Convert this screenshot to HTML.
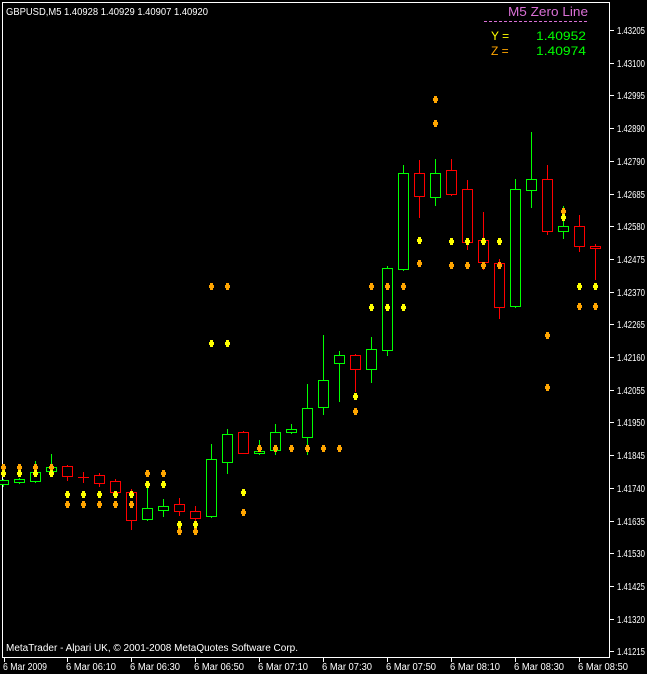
<!DOCTYPE html>
<html><head><meta charset="utf-8"><style>
html,body{margin:0;padding:0;background:#000;}
svg{display:block;}
text{font-family:"Liberation Sans",sans-serif;}
</style></head><body>
<svg id="s" width="647" height="674" xmlns="http://www.w3.org/2000/svg" shape-rendering="crispEdges">
<rect width="647" height="674" fill="#000"/>
<rect x="2.5" y="2.5" width="607" height="655" fill="none" stroke="#fff" stroke-width="1"/>
<g id="c"></g>
<g id="d"></g>
<text x="6" y="15" fill="#fff" font-size="10" textLength="202" lengthAdjust="spacingAndGlyphs">GBPUSD,M5  1.40928 1.40929 1.40907 1.40920</text>
<text x="508" y="16" fill="#da70d6" font-size="13" textLength="80" lengthAdjust="spacingAndGlyphs">M5 Zero Line</text>
<line x1="484" y1="21.5" x2="588" y2="21.5" stroke="#da70d6" stroke-dasharray="3,2"/>
<text x="491" y="40" fill="#ffff00" font-size="12">Y =</text>
<text x="536" y="40" fill="#00ff00" font-size="12" textLength="50" lengthAdjust="spacingAndGlyphs">1.40952</text>
<text x="491" y="55" fill="#ffa500" font-size="12">Z =</text>
<text x="536" y="55" fill="#00ff00" font-size="12" textLength="50" lengthAdjust="spacingAndGlyphs">1.40974</text>
<text x="6" y="651" fill="#fff" font-size="10" textLength="292" lengthAdjust="spacingAndGlyphs">MetaTrader - Alpari UK, © 2001-2008 MetaQuotes Software Corp.</text>
<g id="p" fill="#fff" font-size="10"></g>
<g id="t" fill="#fff" font-size="10"></g>
</svg>
<script>
var ns="http://www.w3.org/2000/svg";
function el(p,n,a,txt){var e=document.createElementNS(ns,n);for(var k in a)e.setAttribute(k,a[k]);if(txt)e.textContent=txt;document.getElementById(p).appendChild(e);return e;}
// [green?, bodyTop, bodyBot, wickTop, wickBot]
var C=[[1,480,484,479,486],[1,479,482,478,483],[1,472,481,461,482],[1,467,471,454,472],[0,466,476,465,480],[0,477,477,472,482],
[0,475,483,473,486],[0,481,492,479,493],[0,492,520,489,529],[1,508,519,485,520],[1,506,510,499,516],[0,504,511,498,515],
[0,511,518,506,528],[1,459,516,444,517],[1,434,462,429,473],[0,432,453,431,453],[1,451,453,440,454],[1,432,450,424,454],
[1,429,432,424,433],[1,408,437,384,454],[1,380,407,335,414],[1,355,363,351,401],[0,355,369,354,391],[1,349,369,337,382],
[1,268,350,266,355],[1,173,269,165,270],[0,173,196,160,217],[1,173,197,159,205],[0,170,194,159,195],[0,189,242,180,249],
[0,240,262,212,269],[0,263,307,259,318],[1,189,306,179,307],[1,179,190,132,207],[0,179,231,165,234],[1,226,231,206,238],
[0,226,246,215,251],[0,246,248,244,279]];
C.forEach(function(c,k){var x=3+16*k,col=c[0]?"#00ff00":"#ff0000";
 el("c","line",{x1:x+.5,y1:c[3],x2:x+.5,y2:c[4]+1,stroke:col});
 if(c[2]-c[1]<1){el("c","line",{x1:x-5,y1:c[1]+.5,x2:x+6,y2:c[1]+.5,stroke:col});}
 else el("c","rect",{x:x-4.5,y:c[1]+.5,width:10,height:c[2]-c[1],fill:"#000",stroke:col});
});
var Y="#ffff00",O="#ffa500";
var D=[[0,467,O],[0,473,Y],[1,467,O],[1,473,Y],[2,467,O],[2,473,Y],[3,467,O],[3,473,Y],
[4,494,Y],[4,504,O],[5,494,Y],[5,504,O],[6,494,Y],[6,504,O],[7,494,Y],[7,504,O],[8,494,Y],[8,504,O],
[9,473,O],[9,484,Y],[10,473,O],[10,484,Y],[11,524,Y],[11,531,O],[12,524,Y],[12,531,O],
[13,286,O],[13,343,Y],[14,286,O],[14,343,Y],[15,492,Y],[15,512,O],
[16,448,O],[17,448,O],[18,448,O],[19,448,O],[20,448,O],[21,448,O],[22,396,Y],[22,411,O],
[23,286,O],[23,307,Y],[24,286,O],[24,307,Y],[25,286,O],[25,307,Y],[26,240,Y],[26,263,O],
[27,99,O],[27,123,O],[28,241,Y],[28,265,O],[29,241,Y],[29,265,O],[30,241,Y],[30,265,O],[31,241,Y],[31,265,O],
[34,335,O],[34,387,O],[35,211,O],[35,217,Y],[36,286,Y],[36,306,O],[37,286,Y],[37,306,O]];
D.forEach(function(d){var x=3+16*d[0],y=d[1];
 el("d","rect",{x:x-1,y:y-3,width:3,height:7,fill:d[2]});
 el("d","rect",{x:x-2,y:y-1,width:5,height:3,fill:d[2]});
});
var P=["1.43205","1.43100","1.42995","1.42890","1.42790","1.42685","1.42580","1.42475","1.42370","1.42265","1.42160","1.42055","1.41950","1.41845","1.41740","1.41635","1.41530","1.41425","1.41320","1.41215"];
P.forEach(function(p,i){var y=Math.round(30+i*32.7);
 el("p","line",{x1:610,y1:y+.5,x2:614,y2:y+.5,stroke:"#fff"});
 el("p","text",{x:617,y:y+4,textLength:28,lengthAdjust:"spacingAndGlyphs"},p);
});
var T=[[4,"6 Mar 2009"],[67,"6 Mar 06:10"],[131,"6 Mar 06:30"],[195,"6 Mar 06:50"],[259,"6 Mar 07:10"],[323,"6 Mar 07:30"],[387,"6 Mar 07:50"],[451,"6 Mar 08:10"],[515,"6 Mar 08:30"],[579,"6 Mar 08:50"]];
T.forEach(function(t){
 el("t","line",{x1:t[0]+.5,y1:658,x2:t[0]+.5,y2:662,stroke:"#fff"});
 el("t","text",{x:t[0]-1,y:670,textLength:t[1].length>10?50:44,lengthAdjust:"spacingAndGlyphs"},t[1]);
});
</script>
</body></html>
